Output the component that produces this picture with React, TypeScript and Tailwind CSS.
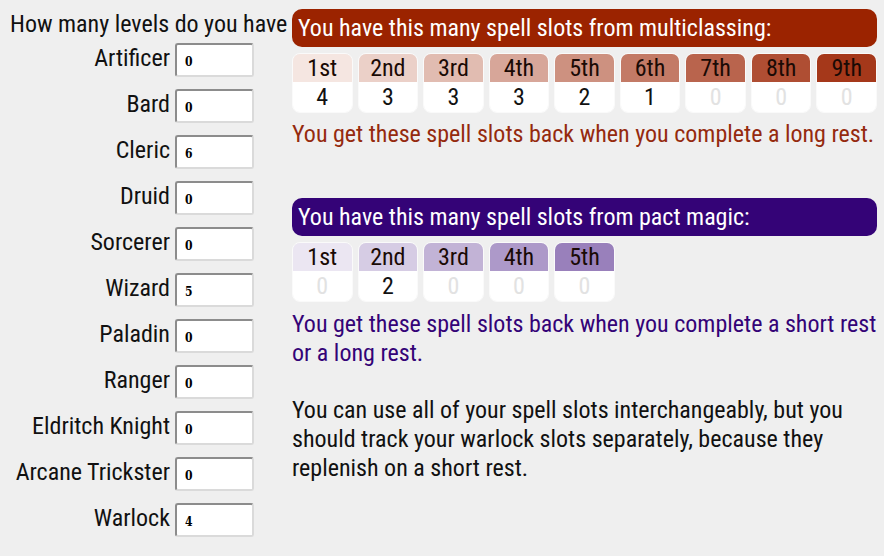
const classes = [
  { name: 'Artificer', value: '0' },
  { name: 'Bard', value: '0' },
  { name: 'Cleric', value: '6' },
  { name: 'Druid', value: '0' },
  { name: 'Sorcerer', value: '0' },
  { name: 'Wizard', value: '5' },
  { name: 'Paladin', value: '0' },
  { name: 'Ranger', value: '0' },
  { name: 'Eldritch Knight', value: '0' },
  { name: 'Arcane Trickster', value: '0' },
  { name: 'Warlock', value: '4' },
]

const multiSlots = [
  { label: '1st', count: 4, bg: 'bg-[#f5e6e1]' },
  { label: '2nd', count: 3, bg: 'bg-[#ebd0c8]' },
  { label: '3rd', count: 3, bg: 'bg-[#e1bcb1]' },
  { label: '4th', count: 3, bg: 'bg-[#d7a699]' },
  { label: '5th', count: 2, bg: 'bg-[#cd9180]' },
  { label: '6th', count: 1, bg: 'bg-[#c37a66]' },
  { label: '7th', count: 0, bg: 'bg-[#b9644d]' },
  { label: '8th', count: 0, bg: 'bg-[#af4e33]' },
  { label: '9th', count: 0, bg: 'bg-[#a5381a]' },
]

const pactSlots = [
  { label: '1st', count: 0, bg: 'bg-[#ebe6f2]' },
  { label: '2nd', count: 2, bg: 'bg-[#d6cce4]' },
  { label: '3rd', count: 0, bg: 'bg-[#c2b3d6]' },
  { label: '4th', count: 0, bg: 'bg-[#ad99c9]' },
  { label: '5th', count: 0, bg: 'bg-[#9980bb]' },
]

type Slot = { label: string; count: number; bg: string }

function SlotCell({ slot }: { slot: Slot }) {
  return (
    <div className="flex flex-col overflow-hidden rounded-[8px] border border-white/70">
      <div className={`flex h-[28px] items-center justify-center text-[#1a0a05] ${slot.bg}`}>
        {slot.label}
      </div>
      <div
        className={`flex h-[30px] items-center justify-center bg-white ${
          slot.count === 0 ? 'text-[#e2e2e2]' : 'text-[#111]'
        }`}
      >
        {slot.count}
      </div>
    </div>
  )
}

function LevelRow({ name, value }: { name: string; value: string }) {
  return (
    <div className="flex items-center gap-[5px]">
      <label className="w-[160px] whitespace-nowrap pb-[4px] text-right">{name}</label>
      <input
        type="text"
        defaultValue={value}
        className="h-[34px] w-[79px] rounded-[3px] border-2 border-t-[#8c8c8c] border-l-[#8c8c8c] border-r-[#dadada] border-b-[#dadada] bg-white pl-[8px] pt-[3px] font-['DejaVu_Serif',serif] text-[12px] font-bold text-black outline-none"
      />
    </div>
  )
}

export default function App() {
  return (
    <div className="flex min-h-[556px] bg-[#efefef] pl-[10px] font-['Roboto',sans-serif] text-[24px] leading-[29px] text-[#111] font-stretch-condensed">
      <div className="flex w-[282px] flex-col pt-[10px]">
        <p className="whitespace-nowrap">How many levels do you have</p>
        <div className="mt-[4px] flex flex-col gap-[12px]">
          {classes.map((c) => (
            <LevelRow key={c.name} name={c.name} value={c.value} />
          ))}
        </div>
      </div>

      <div className="flex w-[585px] flex-col pt-[9px]">
        <div className="flex h-[38px] items-center whitespace-nowrap rounded-[10px] bg-[#9b2300] px-[6px] text-white">
          You have this many spell slots from multiclassing:
        </div>
        <div className="mt-[6px] grid grid-cols-9 gap-[5px]">
          {multiSlots.map((s) => (
            <SlotCell key={s.label} slot={s} />
          ))}
        </div>
        <p className="mt-[7px] whitespace-nowrap text-[#952a0e]">
          You get these spell slots back when you complete a long rest.
        </p>

        <div className="mt-[49px] flex h-[38px] items-center whitespace-nowrap rounded-[10px] bg-[#340377] px-[6px] text-white">
          You have this many spell slots from pact magic:
        </div>
        <div className="mt-[6px] grid grid-cols-9 gap-[5px]">
          {pactSlots.map((s) => (
            <SlotCell key={s.label} slot={s} />
          ))}
        </div>
        <p className="mt-[8px] w-[592px] text-[#340377]">
          You get these spell slots back when you complete a short rest or a long rest.
        </p>

        <p className="mt-[28px]">
          You can use all of your spell slots interchangeably, but you should track your
          warlock slots separately, because they replenish on a short rest.
        </p>
      </div>
    </div>
  )
}
